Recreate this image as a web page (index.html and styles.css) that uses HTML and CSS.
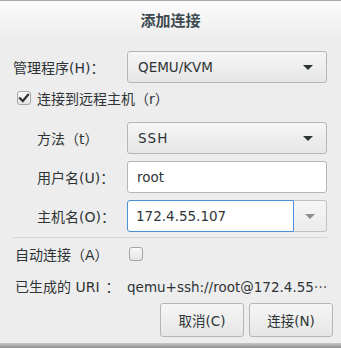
FILE: index.html
```html
<!DOCTYPE html>
<html lang="zh-CN">
<head>
<meta charset="utf-8">
<title>添加连接</title>
<link rel="stylesheet" href="styles.css">
</head>
<body>
<div class="dialog">
  <div class="titlebar">添加连接</div>
  <div class="content">
    <div class="row">
      <span class="label">管理程序(H)<span class="fw cl">：</span></span>
      <div class="combo"><span>QEMU/KVM</span><span class="arrow"></span></div>
    </div>
    <div class="checkrow">
      <span class="check checked">
        <svg width="12" height="12" viewBox="0 0 12 12"><path d="M2 6.2 L4.8 9 L10 2.8" fill="none" stroke="#2e3436" stroke-width="2.2" stroke-linecap="square"/></svg>
      </span>
      <span class="checklabel">连接到远程主机<span class="fw op">（</span>r<span class="fw cl">）</span></span>
    </div>
    <div class="row sub first">
      <span class="label">方法<span class="fw op">（</span>t<span class="fw cl">）</span></span>
      <div class="combo"><span class="ssh">SSH</span><span class="arrow"></span></div>
    </div>
    <div class="row sub gap">
      <span class="label">用户名(U)<span class="fw cl">：</span></span>
      <div class="entry">root</div>
    </div>
    <div class="row sub gap">
      <span class="label">主机名(O)<span class="fw cl">：</span></span>
      <div class="comboentry">
        <div class="ce-text">172.4.55.107</div>
        <div class="ce-btn"><span class="arrow light"></span></div>
      </div>
    </div>
    <div class="separator"></div>
    <div class="row2 auto">
      <span class="label2">自动连接<span class="fw op">（</span>A<span class="fw cl">）</span></span>
      <span class="check"></span>
    </div>
    <div class="row2 uri">
      <span class="label2">已生成的 URI<span class="fw cl sp">：</span></span>
      <span class="urival">qemu+ssh://root@172.4.55<span class="ell">…</span></span>
    </div>
  </div>
  <div class="actions">
    <button class="btn">取消(C)</button>
    <button class="btn">连接(N)</button>
  </div>
  <div class="shadow"></div>
</div>
</body>
</html>
```
FILE: styles.css
```css
html, body {
  margin: 0;
  padding: 0;
}
body {
  width: 341px;
  height: 348px;
  overflow: hidden;
  background: #ededed;
  font-family: "DejaVu Sans", "Noto Sans CJK SC", sans-serif;
  font-size: 13.5px;
  color: #2e3436;
}
.dialog {
  width: 341px;
  height: 348px;
  display: flex;
  flex-direction: column;
  background: #ededed;
}
.titlebar {
  height: 36px;
  border-top: 1px solid #a9a9a9;
  background: linear-gradient(#fbfbfb, #ededed);
  display: flex;
  align-items: center;
  justify-content: center;
  font-family: "Noto Sans CJK SC", sans-serif;
  font-weight: bold;
  font-size: 15px;
  color: #3d4a50;
  padding-bottom: 3px;
}
.content {
  padding: 11px 14px 0 13px;
  display: flex;
  flex-direction: column;
}
.row {
  display: flex;
  align-items: center;
  height: 32px;
}
.label {
  width: 114px;
  flex: none;
  white-space: nowrap;
  font-size: 14px;
}
.fw {
  display: inline-block;
  width: 1em;
  font-family: "Noto Sans CJK SC", sans-serif;
}
.fw.op { text-align: right; }
.fw.cl { text-align: left; }
.fw.sp { padding-left: 6px; }
.row.sub .label {
  width: 90px;
  padding-left: 24px;
}
.row.first { margin-top: 13px; }
.row.gap { margin-top: 7px; }
.combo {
  flex: 1;
  box-sizing: border-box;
  height: 32px;
  border: 1px solid #b6b6b3;
  border-radius: 3px;
  background: linear-gradient(#f6f6f6, #e6e6e6);
  display: flex;
  align-items: center;
  justify-content: space-between;
  padding: 0 13px 0 10px;
}
.combo .ssh { letter-spacing: 1px; }
.arrow {
  width: 0;
  height: 0;
  border-left: 5px solid transparent;
  border-right: 5px solid transparent;
  border-top: 5px solid #2e3436;
}
.arrow.light { border-top-color: #8d9091; }
.checkrow {
  display: flex;
  align-items: center;
  height: 22px;
  margin-top: 4px;
  padding-left: 4px;
}
.check {
  width: 14px;
  height: 14px;
  box-sizing: border-box;
  border: 1px solid #a6a6a6;
  border-radius: 3px;
  background: linear-gradient(#fafafa, #e4e4e4);
  display: inline-flex;
  align-items: center;
  justify-content: center;
  flex: none;
}
.checklabel {
  margin-left: 6px;
  font-size: 14px;
  white-space: nowrap;
}
.entry {
  flex: 1;
  height: 32px;
  box-sizing: border-box;
  border: 1px solid #b6b6b3;
  border-radius: 3px;
  background: #ffffff;
  display: flex;
  align-items: center;
  padding-left: 9px;
}
.comboentry {
  flex: 1;
  height: 32px;
  display: flex;
}
.ce-text {
  flex: 1;
  box-sizing: border-box;
  border: 1px solid #4a90d9;
  border-radius: 3px 0 0 3px;
  background: #ffffff;
  display: flex;
  align-items: center;
  padding-left: 8px;
}
.ce-btn {
  width: 33px;
  box-sizing: border-box;
  border: 1px solid #c2c2c0;
  border-left: none;
  border-radius: 0 3px 3px 0;
  background: linear-gradient(#f6f6f6, #ececec);
  display: flex;
  align-items: center;
  justify-content: center;
}
.separator {
  height: 1px;
  background: #d6d6d6;
  margin-top: 5px;
}
.row2 {
  display: flex;
  align-items: center;
  height: 22px;
  padding-left: 2px;
}
.row2.auto { margin-top: 5px; }
.row2.uri { margin-top: 10px; }
.label2 {
  width: 112px;
  flex: none;
  white-space: nowrap;
  font-size: 14px;
}
.row2.auto .check { margin-left: 2px; }
.urival { white-space: nowrap; }
.ell { font-family: "Noto Sans CJK SC", sans-serif; }
.actions {
  display: flex;
  justify-content: flex-end;
  gap: 5px;
  padding-right: 8px;
  margin-top: 6px;
}
.btn {
  width: 84px;
  height: 34px;
  box-sizing: border-box;
  border: 1px solid #b6b6b3;
  border-radius: 3px;
  background: linear-gradient(#f6f6f6, #e6e6e6);
  font-family: "DejaVu Sans", "Noto Sans CJK SC", sans-serif;
  font-size: 13.5px;
  color: #2e3436;
  padding: 0;
}
.shadow {
  margin-top: auto;
  height: 5px;
  background: linear-gradient(#c9c9c9, #8f8f8f);
}
```
